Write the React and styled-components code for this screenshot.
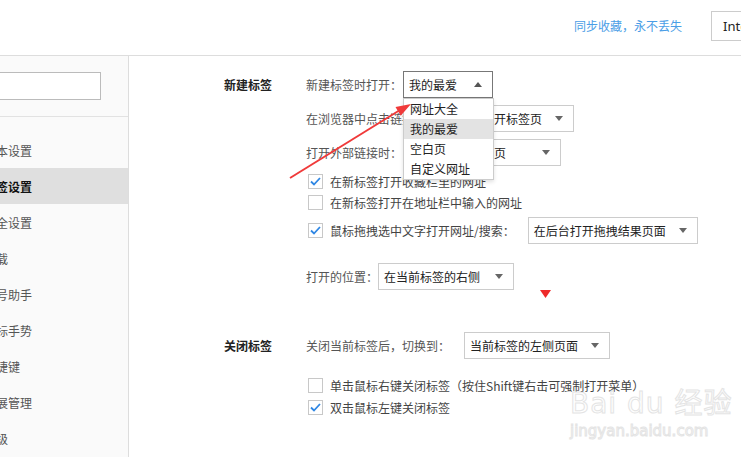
import React from 'react'
import styled, { createGlobalStyle } from 'styled-components'

const GlobalStyle = createGlobalStyle`
  html, body {
    margin: 0;
    padding: 0;
    background: #fff;
  }
  body {
    font-family: "Noto Sans CJK SC", "Noto Sans", sans-serif;
    font-size: 12px;
    color: #333;
  }
  * {
    box-sizing: border-box;
  }
`

const Page = styled.div`
  position: relative;
  width: 741px;
  height: 457px;
  overflow: hidden;
`

const Header = styled.div`
  height: 56px;
  border-bottom: 1px solid #ddd;
  display: flex;
  align-items: center;
  justify-content: flex-end;
  padding-bottom: 4px;
`

const SyncLink = styled.a`
  color: #4a9de6;
  font-size: 12px;
  margin-right: 29px;
  text-decoration: none;
  white-space: nowrap;
`

const ModeBox = styled.div`
  flex-shrink: 0;
  width: 60px;
  height: 30px;
  margin-right: -30px;
  border: 1px solid #ccc;
  padding: 0 11px;
  display: flex;
  align-items: center;
  font-family: "Noto Sans", sans-serif;
  font-size: 13px;
  color: #222;
  overflow: hidden;
  white-space: nowrap;
`

const Body = styled.div`
  display: flex;
  height: 401px;
`

const Sidebar = styled.div`
  flex-shrink: 0;
  width: 170px;
  margin-left: -41px;
  background: #fafafa;
  border-right: 1px solid #ddd;
`

const SearchArea = styled.div`
  padding: 16px 27px 16px 16px;
  border-bottom: 1px solid #e2e2e2;
`

const SearchInput = styled.div`
  height: 28px;
  background: #fff;
  border: 1px solid #bbb;
`

const Menu = styled.ul`
  list-style: none;
  margin: 0;
  padding: 15px 0 0;
`

const MenuItem = styled.li`
  height: 36px;
  display: flex;
  align-items: center;
  padding-left: 25px;
  font-size: 12px;
  color: ${p => (p.active ? '#111' : '#555')};
  font-weight: ${p => (p.active ? 'bold' : 'normal')};
  background: ${p => (p.active ? '#dfdfdf' : 'transparent')};
`

const Main = styled.div`
  flex: 1;
  padding: 15px 0 0 95px;
`

const Section = styled.div`
  display: grid;
  grid-template-columns: 82px 1fr;
  margin-bottom: ${p => p.gap || 0}px;
`

const SectionTitle = styled.div`
  height: 27px;
  display: flex;
  align-items: center;
  font-weight: bold;
  color: #222;
`

const Column = styled.div`
  display: flex;
  flex-direction: column;
`

const Row = styled.div`
  display: flex;
  align-items: center;
  height: 27px;
  margin-top: ${p => p.top || 0}px;
`

const Label = styled.span`
  color: #555;
  white-space: nowrap;
  margin-right: ${p => p.space || 0}px;
`

const SelectBox = styled.div`
  position: relative;
  flex-shrink: 0;
  width: ${p => p.width}px;
  height: 27px;
  border: 1px solid ${p => (p.open ? '#777' : '#ccc')};
  background: #fff;
  display: flex;
  align-items: center;
  justify-content: space-between;
  padding: 0 10px 0 5px;
  color: #222;
  white-space: nowrap;
`

const Arrow = styled.span`
  width: 0;
  height: 0;
  border-left: 4px solid transparent;
  border-right: 4px solid transparent;
  ${p =>
    p.up
      ? 'border-bottom: 5px solid #555;'
      : 'border-top: 5px solid #666;'}
`

const DropList = styled.ul`
  position: absolute;
  top: 100%;
  left: -1px;
  width: 91px;
  margin: 1px 0 0;
  padding: 0;
  list-style: none;
  background: #fff;
  border: 1px solid #ccc;
  box-shadow: 0 2px 4px rgba(0, 0, 0, 0.12);
  z-index: 5;
`

const DropItem = styled.li`
  height: 20px;
  line-height: 20px;
  padding-left: 6px;
  color: #222;
  background: ${p => (p.hover ? '#e3e3e3' : '#fff')};
`

const CheckRow = styled.div`
  display: flex;
  align-items: center;
  height: ${p => p.h || 21}px;
  margin-top: ${p => p.top || 0}px;
  padding-left: 2px;
`

const Box = styled.span`
  flex-shrink: 0;
  width: 15px;
  height: 15px;
  border: 1px solid #c8c8c8;
  background: #fff;
  margin-right: 7px;
  display: flex;
  align-items: center;
  justify-content: center;
`

const CheckText = styled.span`
  color: #444;
  white-space: nowrap;
  margin-right: ${p => p.space || 0}px;
`

const Overlay = styled.svg`
  position: absolute;
  left: 0;
  top: 0;
  pointer-events: none;
  z-index: 10;
`

const Watermark = styled.div`
  position: absolute;
  left: 570px;
  top: 390px;
  color: transparent;
  -webkit-text-stroke: 1px #e4e4e4;
  font-family: "DejaVu Sans", "Noto Sans CJK SC", sans-serif;
  line-height: 1;
  white-space: nowrap;
  pointer-events: none;
`

const MarkTop = styled.div`
  font-size: 28px;
  letter-spacing: 1px;
`

const MarkBottom = styled.div`
  font-size: 15px;
  margin-top: 6px;
`

const Tick = () => (
  <svg width="11" height="9" viewBox="0 0 11 9">
    <path d="M1 4.5 L4 7.5 L10 1" fill="none" stroke="#2f87e4" strokeWidth="1.8" />
  </svg>
)

const Check = ({ checked, children, h, top }) => (
  <CheckRow h={h} top={top}>
    <Box>{checked && <Tick />}</Box>
    {children}
  </CheckRow>
)

const Select = ({ width, open, children, list }) => (
  <SelectBox width={width} open={open}>
    <span>{children}</span>
    <Arrow up={open} />
    {list}
  </SelectBox>
)

const menu = ['基本设置', '标签设置', '安全设置', '下载', '账号助手', '鼠标手势', '快捷键', '扩展管理', '高级']

export default function App() {
  return (
    <Page>
      <GlobalStyle />
      <Header>
        <SyncLink>同步收藏，永不丢失</SyncLink>
        <ModeBox>Internet</ModeBox>
      </Header>
      <Body>
        <Sidebar>
          <SearchArea>
            <SearchInput />
          </SearchArea>
          <Menu>
            {menu.map((m, i) => (
              <MenuItem key={m} active={i === 1}>
                {m}
              </MenuItem>
            ))}
          </Menu>
        </Sidebar>
        <Main>
          <Section gap={42}>
            <SectionTitle>新建标签</SectionTitle>
            <Column>
              <Row>
                <Label space={1}>新建标签时打开：</Label>
                <Select
                  width={90}
                  open
                  list={
                    <DropList>
                      <DropItem>网址大全</DropItem>
                      <DropItem hover>我的最爱</DropItem>
                      <DropItem>空白页</DropItem>
                      <DropItem>自定义网址</DropItem>
                    </DropList>
                  }
                >
                  我的最爱
                </Select>
              </Row>
              <Row top={7}>
                <Label space={2}>在浏览器中点击链接时：</Label>
                <Select width={134}>在后台打开标签页</Select>
              </Row>
              <Row top={7}>
                <Label space={2}>打开外部链接时：</Label>
                <Select width={157}>在前台打开标签页</Select>
              </Row>
              <Check checked top={5}>
                <CheckText>在新标签打开收藏栏里的网址</CheckText>
              </Check>
              <Check>
                <CheckText>在新标签打开在地址栏中输入的网址</CheckText>
              </Check>
              <Check checked h={27} top={4}>
                <CheckText space={13}>鼠标拖拽选中文字打开网址/搜索：</CheckText>
                <Select width={170}>在后台打开拖拽结果页面</Select>
              </Check>
              <Row top={19}>
                <Label>打开的位置：</Label>
                <Select width={136}>在当前标签的右侧</Select>
              </Row>
            </Column>
          </Section>
          <Section>
            <SectionTitle>关闭标签</SectionTitle>
            <Column>
              <Row>
                <Label space={14}>关闭当前标签后，切换到：</Label>
                <Select width={146}>当前标签的左侧页面</Select>
              </Row>
              <Check h={22} top={15}>
                <CheckText>单击鼠标右键关闭标签（按住Shift键右击可强制打开菜单）</CheckText>
              </Check>
              <Check checked h={22}>
                <CheckText>双击鼠标左键关闭标签</CheckText>
              </Check>
            </Column>
          </Section>
        </Main>
      </Body>
      <Watermark>
        <MarkTop>Bai du 经验</MarkTop>
        <MarkBottom>jingyan.baidu.com</MarkBottom>
      </Watermark>
      <Overlay width="741" height="457" viewBox="0 0 741 457">
        <line x1="290" y1="178" x2="400" y2="110" stroke="#f03a3a" strokeWidth="2" />
        <polygon points="411,104 400.7,115.7 395.5,107.1" fill="#f03a3a" />
        <polygon points="540,290 551,290 545.5,298" fill="#ee2a2a" />
      </Overlay>
    </Page>
  )
}
